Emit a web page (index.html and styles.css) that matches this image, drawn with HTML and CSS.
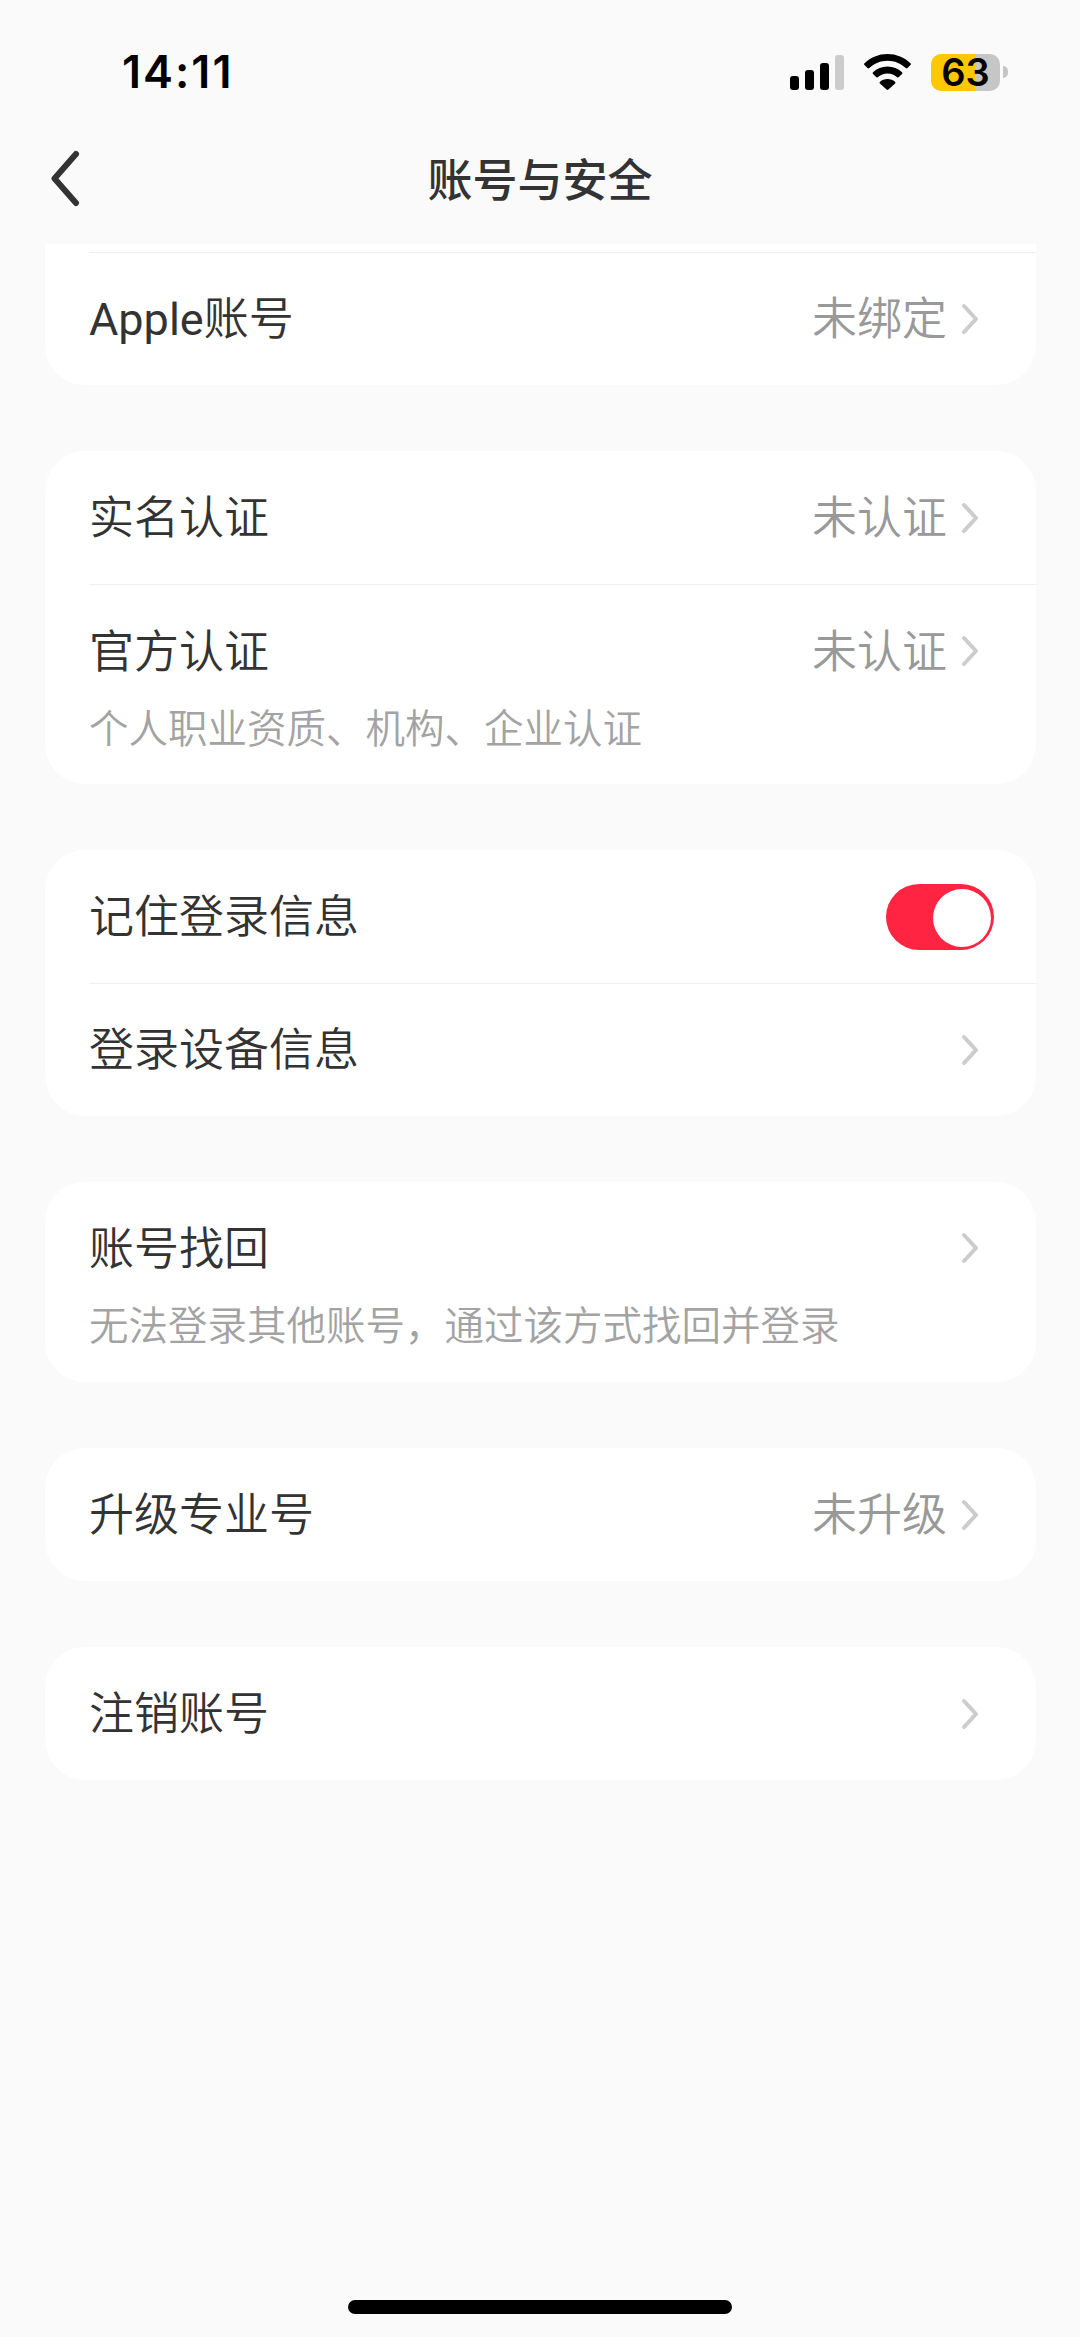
FILE: index.html
```html
<!DOCTYPE html>
<html lang="zh-CN">
<head>
<meta charset="utf-8">
<title>账号与安全</title>
<link rel="stylesheet" href="styles.css">
</head>
<body>
<div class="page">
  <header class="status">
    <span class="time">14:11</span>
    <div class="status-icons">
      <div class="signal"><i class="b1"></i><i class="b2"></i><i class="b3"></i><i class="b4"></i></div>
      <svg class="wifi" width="47" height="36" viewBox="0 0 47 36"><path d="M23.5 0C14.6 0 6.6 3.4.5 9.2c-.6.5-.6 1.300 0 1.800l3 3.100c.5.5 1.300.5 1.800 0C10.100 9.500 16.500 6.800 23.500 6.800s13.400 2.700 18.200 7.300c.5.5 1.300.5 1.800 0l3-3.100c.6-.5.600-1.300 0-1.800C40.400 3.400 32.400 0 23.500 0z"/><path d="M23.500 12.500c-5.600 0-10.700 2.100-14.500 5.700-.5.5-.5 1.300 0 1.800l3.100 3.100c.5.5 1.200.5 1.700.1 2.600-2.300 6-3.700 9.700-3.700s7.100 1.400 9.700 3.700c.5.4 1.200.4 1.700-.1l3.100-3.100c.5-.5.5-1.300 0-1.800-3.800-3.600-8.900-5.700-14.500-5.700z"/><path d="M23.500 25c-2.900 0-5.500 1-7.500 2.800-.5.5-.6 1.300-.1 1.800l6.700 6c.5.5 1.300.5 1.800 0l6.700-6c.5-.5.4-1.300-.1-1.800-2-1.800-4.600-2.800-7.500-2.800z"/></svg>
      <div class="battery">
        <div class="battery-body"><span class="battery-level">63</span></div>
        <i class="battery-nub"></i>
      </div>
    </div>
  </header>

  <nav class="nav">
    <svg class="back" width="30" height="60" viewBox="0 0 30 60"><path d="M26 5 4.500 29.500 26 54"/></svg>
    <h1 class="title">账号与安全</h1>
    <span></span>
  </nav>

  <main class="list">
    <section class="card card-clipped">
      <div class="row row-divided"><span class="label"><span class="latin">Apple</span>账号</span><span class="value">未绑定</span><svg class="chev" width="20" height="34" viewBox="0 0 20 34"><path d="M4 4 16 17 4 30"/></svg></div>
    </section>

    <section class="card">
      <div class="row"><span class="label">实名认证</span><span class="value">未认证</span><svg class="chev" width="20" height="34" viewBox="0 0 20 34"><path d="M4 4 16 17 4 30"/></svg></div>
      <div class="row row-divided row-sub">
        <div class="stack"><span class="label">官方认证</span><span class="sub">个人职业资质、机构、企业认证</span></div>
        <span class="value">未认证</span><svg class="chev" width="20" height="34" viewBox="0 0 20 34"><path d="M4 4 16 17 4 30"/></svg>
      </div>
    </section>

    <section class="card">
      <div class="row row-toggle"><span class="label">记住登录信息</span><div class="toggle"><i class="knob"></i></div></div>
      <div class="row row-divided"><span class="label">登录设备信息</span><svg class="chev" width="20" height="34" viewBox="0 0 20 34"><path d="M4 4 16 17 4 30"/></svg></div>
    </section>

    <section class="card">
      <div class="row row-sub">
        <div class="stack"><span class="label">账号找回</span><span class="sub">无法登录其他账号，通过该方式找回并登录</span></div>
        <svg class="chev" width="20" height="34" viewBox="0 0 20 34"><path d="M4 4 16 17 4 30"/></svg>
      </div>
    </section>

    <section class="card">
      <div class="row"><span class="label">升级专业号</span><span class="value">未升级</span><svg class="chev" width="20" height="34" viewBox="0 0 20 34"><path d="M4 4 16 17 4 30"/></svg></div>
    </section>

    <section class="card">
      <div class="row"><span class="label">注销账号</span><svg class="chev" width="20" height="34" viewBox="0 0 20 34"><path d="M4 4 16 17 4 30"/></svg></div>
    </section>
  </main>

  <div class="home-indicator"></div>
</div>
</body>
</html>
```
FILE: styles.css
```css
* { box-sizing: border-box; }
html, body { margin: 0; padding: 0; }
body {
  width: 1080px;
  height: 2337px;
  overflow: hidden;
  background: #fafafa;
  font-family: "Roboto", "Noto Sans CJK SC", "Noto Sans", sans-serif;
  font-weight: 350;
}
.page {
  height: 2337px;
  display: flex;
  flex-direction: column;
}

/* status bar */
.status {
  height: 48px;
  margin-top: 48px;
  padding: 0 72px 0 122px;
  display: flex;
  align-items: center;
  justify-content: space-between;
}
.time {
  font-family: "Inter", sans-serif;
  font-weight: 600;
  font-size: 45px;
  line-height: 48px;
  color: #000;
  letter-spacing: 2px;
}
.status-icons { display: flex; align-items: center; }
.signal { display: flex; align-items: flex-end; gap: 6px; height: 35px; }
.signal i { display: block; width: 9px; border-radius: 3px; background: #000; }
.signal .b1 { height: 14px; }
.signal .b2 { height: 20px; }
.signal .b3 { height: 27px; }
.signal .b4 { height: 35px; background: #ccc; }
.wifi { margin-left: 20px; }
.battery { display: flex; align-items: center; margin-left: 20px; }
.battery-body {
  width: 69px;
  height: 37px;
  border-radius: 10px;
  background: linear-gradient(90deg, #fdc800 0 44px, #c6c6c6 44px);
  display: flex;
  align-items: center;
  justify-content: center;
}
.battery-level {
  font-family: "Inter", sans-serif;
  font-weight: 600;
  font-size: 38px;
  line-height: 37px;
  color: #000;
}
.battery-nub {
  width: 5px;
  height: 12px;
  margin-left: 3px;
  border-radius: 0 6px 6px 0;
  background: #c6c6c6;
}

/* nav */
.nav {
  height: 148px;
  padding: 18px 0 0 50px;
  display: grid;
  grid-template-columns: 1fr auto 1fr;
  align-items: center;
}
.back { fill: none; stroke: #333; stroke-width: 6; stroke-linecap: round; stroke-linejoin: round; }
.title {
  margin: 6px 0 0 -50px;
  font-size: 45px;
  line-height: 60px;
  font-weight: 500;
  color: #333;
}

/* list */
.list {
  padding: 0 44px 0 45px;
  display: flex;
  flex-direction: column;
  gap: 66px;
}
.card {
  background: #fff;
  border-radius: 40px;
  overflow: hidden;
}
.card-clipped { border-radius: 0 0 40px 40px; padding-top: 8px; }
.row {
  min-height: 133px;
  margin-left: 44px;
  padding-right: 56px;
  display: flex;
  align-items: center;
}
.row-divided { border-top: 1px solid #eeeeee; }
.row-toggle { padding-right: 42px; }
.row-sub { align-items: flex-start; min-height: 200px; padding-top: 36px; }
.row-sub .chev { margin-top: 13px; }
.stack { display: flex; flex-direction: column; gap: 21px; flex: 1; }
.label {
  flex: 1;
  padding-top: 2px;
  font-size: 45px;
  line-height: 60px;
  color: #333;
}
.latin { font-weight: 400; }
.stack .label { flex: none; }
.value {
  padding-top: 2px;
  font-size: 45px;
  line-height: 60px;
  color: #999;
}
.sub {
  font-size: 39.500px;
  line-height: 52px;
  color: #a3a3a3;
}
.chev {
  flex: none;
  margin-left: 13px;
  fill: none;
  stroke: #ccc;
  stroke-width: 4;
  stroke-linecap: round;
  stroke-linejoin: round;
}
.toggle {
  width: 108px;
  height: 66px;
  padding: 5px 3px 0 0;
  border-radius: 33px;
  background: #ff2442;
  display: flex;
  justify-content: flex-end;
}
.knob { display: block; width: 58px; height: 58px; border-radius: 50%; background: #fff; }

/* home indicator */
.home-indicator {
  width: 384px;
  height: 14px;
  margin: auto auto 23px;
  border-radius: 7px;
  background: #000;
}
```
